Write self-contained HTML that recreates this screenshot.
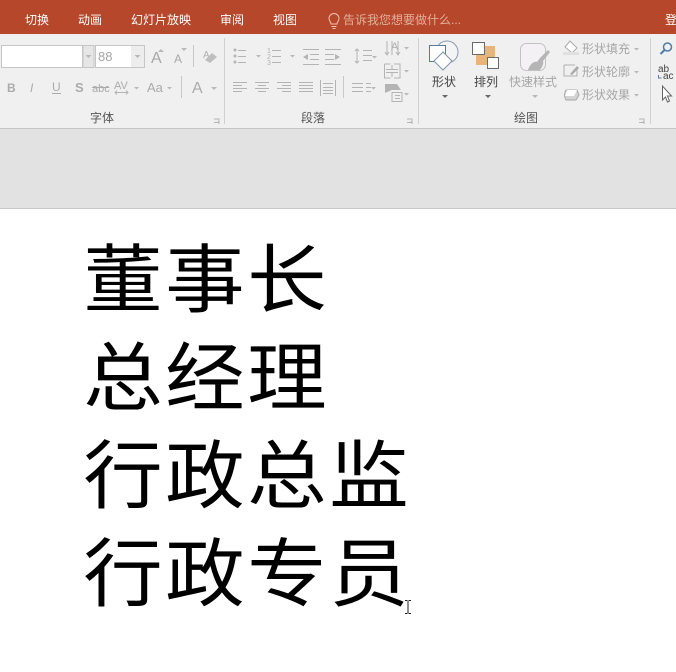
<!DOCTYPE html>
<html><head><meta charset="utf-8">
<style>
html,body{margin:0;padding:0;background:#fff}
#p{position:relative;width:676px;height:672px;overflow:hidden;background:#fff}
svg{position:absolute;left:0;top:0}
text{font-family:"Liberation Sans","Noto Sans CJK SC",sans-serif}
.m{font-family:"Liberation Sans","Noto Sans CJK SC",sans-serif;font-size:76.5px;fill:#000;letter-spacing:2.35px}
.t{font-size:12px;fill:#fff}
.g{font-size:12px;fill:#a6a6a6}
.d{font-size:12px;fill:#444}
.l{font-size:12px;fill:#555}
.i{fill:none;stroke:#b4b4b4;stroke-width:1}
.a{fill:#b8b8b8}
</style></head><body><div id="p">
<svg width="676" height="672" viewBox="0 0 676 672">
<rect width="676" height="34" fill="#B7472A"/>
<rect y="34" width="676" height="94" fill="#F0F0F0"/>
<rect y="128" width="676" height="1" fill="#C6C6C6"/>
<rect y="129" width="676" height="79" fill="#E2E2E2"/>
<rect y="208" width="676" height="1" fill="#C8C8C8"/>

<text class="t" x="25" y="24">切换</text>
<text class="t" x="78" y="24">动画</text>
<text class="t" x="131" y="24">幻灯片放映</text>
<text class="t" x="220" y="24">审阅</text>
<text class="t" x="273" y="24">视图</text>
<path d="M330 26.500h5M331 28.500h3M329.500 24c0-2-2-3-2-5.500a5 5 0 0 1 10 0c0 2.500-2 3.500-2 5.500z" transform="translate(1.500,0)" fill="none" stroke="#EBC4B5" stroke-width="1"/>
<text x="343" y="24" style="font-size:12px;fill:#E3AE9B">告诉我您想要做什么...</text>
<text class="t" x="665" y="24">登</text>

<!-- font group -->
<rect x="1.500" y="45.500" width="81" height="22" fill="#fff" stroke="#C6C6C6"/>
<rect x="83" y="45.500" width="11" height="22" fill="#E6E6E6" stroke="#C6C6C6"/>
<path d="M85.500 55h6l-3 3z" class="a"/>
<rect x="95.500" y="45.500" width="49" height="22" fill="#fff" stroke="#C6C6C6"/>
<rect x="131" y="46" width="13" height="21" fill="#EDEDED"/>
<path d="M134.500 55h6l-3 3z" class="a"/>
<text x="98" y="61" style="font-size:13px;fill:#a5a5a5">88</text>
<text x="151" y="63" style="font-size:16px;fill:#a8a8a8">A</text>
<path d="M158 52l3-3 3 3z" class="a"/>
<text x="174" y="63" style="font-size:12px;fill:#a8a8a8">A</text>
<path d="M181 48h6l-3 3z" class="a"/>
<rect x="193" y="45" width="1" height="22" fill="#C8C8C8"/>
<text x="203" y="58" style="font-size:10px;fill:#b0b0b0">A</text>
<path d="M205 60l7-7 5 4-7 6z" fill="#BEBEBE"/>

<text x="7" y="92" style="font-size:12px;font-weight:bold;fill:#ababab">B</text>
<text x="30" y="92" style="font-size:12px;font-style:italic;fill:#ababab">I</text>
<text x="52" y="91" style="font-size:12px;fill:#ababab">U</text>
<rect x="52" y="93" width="9" height="1" fill="#ababab"/>
<text x="75" y="92" style="font-size:13px;font-weight:bold;fill:#ababab">S</text>
<text x="92" y="92" style="font-size:11px;fill:#ababab">abc</text>
<rect x="92" y="87" width="17" height="1" fill="#ababab"/>
<text x="114" y="89" style="font-size:11px;fill:#ababab">AV</text>
<path d="M115 92.500h13M117 90.500l-2 2 2 2M126 90.500l2 2-2 2" class="i"/>
<path d="M134 87h5l-2.500 2.500z" class="a"/>
<text x="147" y="92" style="font-size:13px;fill:#ababab">Aa</text>
<path d="M167 87h5l-2.500 2.500z" class="a"/>
<rect x="181" y="76" width="1" height="22" fill="#C8C8C8"/>
<text x="192" y="93" style="font-size:16px;fill:#ababab">A</text>
<path d="M211 87h6l-3 3z" class="a"/>
<text class="l" x="90" y="122">字体</text>
<path d="M214 122.500h4v-1M214 119h5v5" fill="none" stroke="#b5b5b5"/>
<rect x="224" y="38" width="1" height="86" fill="#D0D0D0"/>

<!-- paragraph -->
<g class="i">
<path d="M238 50.500h8M238 56.500h8M238 62.500h8"/>
<path d="M272 50.500h9M272 56.500h9M272 62.500h9"/>
<path d="M303 49.500h16M310 54.500h9M310 59.500h9M303 64.500h16"/>
<path d="M325 49.500h16M325 54.500h9M325 59.500h9M325 64.500h16"/>
<path d="M357 49v14M355 51l2-2 2 2M355 61l2 2 2-2M363 50.500h9M363 55.500h9M363 60.500h9"/>
<path d="M233 82.500h14M233 85.500h9M233 88.500h14M233 91.500h9"/>
<path d="M255 82.500h14M258 85.500h8M255 88.500h14M258 91.500h8"/>
<path d="M277 82.500h14M282 85.500h9M277 88.500h14M282 91.500h9"/>
<path d="M299 82.500h14M299 85.500h14M299 88.500h14M299 91.500h14"/>
<path d="M320.500 80v16M335.500 80v16M323 83.500h10M323 87.500h10M323 90.500h10M323 93.500h10"/>
<path d="M352 82.500h11M366 82.500h5M352 86.500h11M366 86.500h5M352 90.500h11M366 90.500h5" transform="translate(0,1)"/>
<path d="M387 41v14M392 41v14M398 41v14M385 52l2 3 2-3M396 52l2 3 2-3"/>
<path d="M384.500 64h6M384.500 64v14h6M394 64h6v14h-6"/>
<path d="M386 69.500h12M386 72.500h12M392 65v4M392 73v4"/>
<path d="M392 92.500h10v9h-10zM395 95.500h5M395 98.500h5"/>
</g>
<g fill="#b4b4b4">
<circle cx="235" cy="50" r="1.500"/><circle cx="235" cy="56" r="1.500"/><circle cx="235" cy="62" r="1.500"/>
<path d="M303 57l5-3v6zM340 57l-5-3v6z"/>
<path d="M385 84h12l4 6h-9l-7 3z"/>
</g>
<text x="267" y="53" style="font-size:7px;fill:#b0b0b0">1</text>
<text x="267" y="59" style="font-size:7px;fill:#b0b0b0">2</text>
<text x="267" y="65" style="font-size:7px;fill:#b0b0b0">3</text>
<text x="391" y="50" style="font-size:11px;fill:#b0b0b0">A</text>
<path d="M256 55h5l-2.500 2.500zM290 55h5l-2.500 2.500zM372 56h5l-2.500 2.500zM404 47h5l-2.500 2.500zM404 70h5l-2.500 2.500zM404 93h5l-2.500 2.500zM371 87h5l-2.500 2.500z" class="a"/>
<rect x="343" y="76" width="1" height="22" fill="#C8C8C8"/>
<text class="l" x="301" y="122">段落</text>
<path d="M407 122.500h4v-1M407 119h5v5" fill="none" stroke="#b5b5b5"/>
<rect x="418" y="38" width="1" height="86" fill="#D0D0D0"/>

<!-- drawing -->
<circle cx="447" cy="52" r="11" fill="#F4F4F4" stroke="#8B9BB0"/>
<rect x="429.500" y="45.500" width="16" height="16" fill="#fff" stroke="#5D7A9C"/>
<path d="M443 52l9 9-9 9-9-9z" fill="#fff" stroke="#7F93AC"/>
<text class="d" x="432" y="86">形状</text>
<path d="M442 95h6l-3 3z" fill="#666"/>
<rect x="476" y="46" width="19" height="19" fill="#E8B477"/>
<rect x="472.500" y="42.500" width="12" height="12" fill="#fff" stroke="#6a6a6a"/>
<rect x="487.500" y="57.500" width="11" height="11" fill="#fff" stroke="#6a6a6a"/>
<text class="d" x="474" y="86">排列</text>
<path d="M485 95h6l-3 3z" fill="#666"/>
<rect x="520.500" y="43.500" width="25" height="27" rx="6" fill="#F4F1F5" stroke="#C2C2C2"/>
<path d="M528 70c2-6 6-9 9-8l3-4 8-8 2 2-7 9c1 3-1 6-3 9z" fill="#B5B5B5"/>
<text class="g" x="509" y="86">快速样式</text>
<path d="M532 95h6l-3 3z" class="a"/>
<path d="M570 41l7 7-5 5-7-6z" fill="#fff" stroke="#aaa"/><rect x="563" y="52" width="16" height="3" fill="#E0E0E0"/>
<path d="M564 65h11M564 65v11h13v-7" fill="none" stroke="#b0b0b0"/><path d="M570 74l7-8 2 2-7 7z" fill="#aaa"/>
<path d="M566 90h11l2 5-3 5h-10q-3-5 0-10z" fill="#D4D4D4" stroke="#A9A9A9"/>
<path d="M567 90h10l-3 6h-9z" fill="#fff"/>
<text class="g" x="582" y="53">形状填充</text>
<text class="g" x="582" y="76">形状轮廓</text>
<text class="g" x="582" y="99">形状效果</text>
<path d="M634 48h5l-2.500 2.500zM634 71h5l-2.500 2.500zM634 94h5l-2.500 2.500z" class="a"/>
<text class="l" x="514" y="122">绘图</text>
<path d="M639 122.500h4v-1M639 119h5v5" fill="none" stroke="#b5b5b5"/>
<rect x="650" y="38" width="1" height="86" fill="#D0D0D0"/>
<circle cx="667.500" cy="47" r="4" fill="none" stroke="#4F7CAB" stroke-width="1.500"/>
<path d="M664.500 50l-4 4" stroke="#4F7CAB" stroke-width="2"/>
<text x="658" y="72" style="font-size:10px;fill:#444">ab</text>
<text x="663" y="79" style="font-size:10px;fill:#444">ac</text>
<path d="M658.500 75v3h3" fill="none" stroke="#4F7CAB"/>
<path d="M662.500 86v14l3-3 2 5 2-1-2-5h4z" fill="#fff" stroke="#666"/>

<!-- main text -->
<text class="m" transform="translate(83.200,306) scale(1.04,.97)">董事长</text>
<text class="m" transform="translate(83.200,404) scale(1.04,.97)">总经理</text>
<text class="m" transform="translate(83.200,502) scale(1.04,.97)">行政总监</text>
<text class="m" transform="translate(83.200,600) scale(1.04,.97)">行政专员</text>
<path d="M405 600.500h2.500M408.500 600.500h2.500M405 613.500h2.500M408.500 613.500h2.500M408 601v12" fill="none" stroke="#222"/>
</svg>
</div></body></html>
